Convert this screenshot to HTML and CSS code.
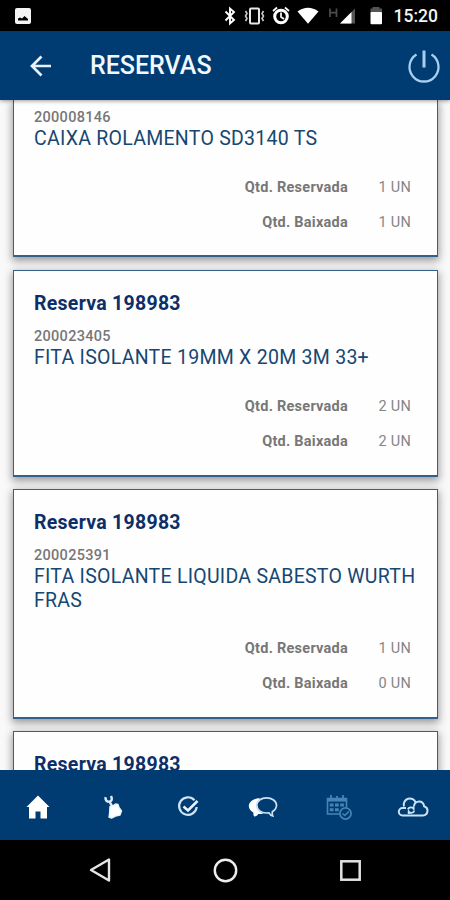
FILE: index.html
```html
<!DOCTYPE html>
<html lang="pt-BR">
<head>
    <meta charset="UTF-8">
    <meta name="viewport" content="width=device-width, initial-scale=1.0">
    <title>Reservas</title>
    <link rel="stylesheet" href="styles.css">
</head>
<body>
    <div class="app">
        <div class="status-bar">
            <svg class="status-photo" width="16" height="16" viewBox="0 0 16 16">
                <rect width="16" height="16" rx="2" fill="#f4f4f4"/>
                <path d="M3 12.500v-2l2-1 2 1 2.500-2.500 3.500 3v1.500z" fill="#000"/>
            </svg>
            <svg class="status-icons" width="162" height="20" viewBox="222 6 162 20">
                <path d="M225.500 11.500l8.500 8.500-4 3.500V8.500l4 3.500-8.500 8.500" fill="none" stroke="#fff" stroke-width="1.900"/>
                <rect x="250" y="8.500" width="9" height="15" rx="1" fill="none" stroke="#e8e8e8" stroke-width="2"/>
                <path d="M245.500 11l1.500 2.500-1.500 2.500 1.500 2.500-1.500 2.500M263.500 11l-1.500 2.500 1.500 2.500-1.500 2.500 1.500 2.500" fill="none" stroke="#ccc" stroke-width="1.600"/>
                <circle cx="281" cy="16.500" r="6.300" fill="none" stroke="#fff" stroke-width="3"/>
                <path d="M281 12.500v4.500l3 2M273 11l4-3.500M289 11l-4-3.500" fill="none" stroke="#fff" stroke-width="1.700"/>
                <path d="M297.500 11.500Q308 4 318.500 11.500L308 23.700z" fill="#fff"/>
                <path d="M340 23.500L355 8.500v15z" fill="#555"/>
                <path d="M340 23.500L351.500 12v11.500z" fill="#fff"/>
                <path d="M330 8.500v8.500M336.500 8.500v8.500M330 12.700h6.500" fill="none" stroke="#4c4c4c" stroke-width="1.700"/>
                <path d="M370.500 8.500h2v-1.500h7v1.500h2.500v5h-11.500z" fill="#555"/>
                <rect x="370.500" y="12" width="11.500" height="12.300" rx="1" fill="#fff"/>
            </svg>
            <span class="clock">15:20</span>
        </div>

        <header class="header">
            <svg class="back" width="22" height="22" viewBox="0 0 22 22">
                <path d="M21 11H2.500M11.500 1.500L2 11l9.500 9.500" fill="none" stroke="#e6f1fc" stroke-width="2.700"/>
            </svg>
            <h1>RESERVAS</h1>
            <svg class="power" width="34" height="34" viewBox="0 0 34 34">
                <path d="M9.500 5.600a14.500 14.500 0 1 0 15 0" fill="none" stroke="#a9cff0" stroke-width="2.300"/>
                <path d="M17 1.500v17" stroke="#a9cff0" stroke-width="3"/>
            </svg>
        </header>

        <main class="list">
            <div class="card card-top">
                <div class="code">200008146</div>
                <div class="item">CAIXA ROLAMENTO SD3140 TS</div>
                <div class="amounts">
                    <div class="row"><b>Qtd. Reservada</b><span>1 UN</span></div>
                    <div class="row"><b>Qtd. Baixada</b><span>1 UN</span></div>
                </div>
            </div>
            <div class="card">
                <h2>Reserva 198983</h2>
                <div class="code">200023405</div>
                <div class="item">FITA ISOLANTE 19MM X 20M 3M 33+</div>
                <div class="amounts">
                    <div class="row"><b>Qtd. Reservada</b><span>2 UN</span></div>
                    <div class="row"><b>Qtd. Baixada</b><span>2 UN</span></div>
                </div>
            </div>
            <div class="card card-tall">
                <h2>Reserva 198983</h2>
                <div class="code">200025391</div>
                <div class="item">FITA ISOLANTE LIQUIDA SABESTO WURTH FRAS</div>
                <div class="amounts">
                    <div class="row"><b>Qtd. Reservada</b><span>1 UN</span></div>
                    <div class="row"><b>Qtd. Baixada</b><span>0 UN</span></div>
                </div>
            </div>
            <div class="card">
                <h2>Reserva 198983</h2>
            </div>
        </main>

        <nav class="tabs">
            <a class="tab">
                <svg width="24" height="24" viewBox="0 0 24 24">
                    <path d="M12 .5L.5 12H3v11.500h6.500v-7h5v7H21V12h2.500z" fill="#fff"/>
                </svg>
            </a>
            <a class="tab">
                <svg width="24" height="24" viewBox="0 0 24 24">
                    <path d="M4.700 2.200c-.7 2.500.8 4.800 3.600 4.500 2.500-.2 3.300-2.500 1.700-5.700M8.500 6.500l2.500 4.500" fill="none" stroke="#dcebf7" stroke-width="2.500"/>
                    <path d="M9 11.500l3.500-1 2-1.500 2.500.5 1 3 2.500 3.500-1.500 4-4.500 1-4 2-2.500-1 .5-3z" fill="#fff" stroke="#e8f3fb" stroke-width="1.400" stroke-linejoin="round"/>
                </svg>
            </a>
            <a class="tab">
                <svg width="24" height="24" viewBox="0 0 24 24">
                    <path d="M18.500 5.200A8.800 8.800 0 1 0 20.700 12" fill="none" stroke="#cfe4f5" stroke-width="2.200"/>
                    <path d="M7.500 11.500l4.500 4 9.500-9.500" fill="none" stroke="#e6f2fc" stroke-width="2.500"/>
                </svg>
            </a>
            <a class="tab">
                <svg width="30" height="24" viewBox="0 0 30 24">
                    <path d="M12 3.200C5 3.200.8 7 .8 11c0 3 2 5 4.500 6.500 0 2 .3 3 1 4 2 0 3-1 4-2.500h5C10 16 9 13 8.500 9.500z" fill="#fff"/>
                    <path d="M18.500 2.800c-5.500 0-9.700 3.400-9.700 7.500 0 4.500 4.200 7.700 9.700 7.700l2.500-.2c1 1.800 2 3 3.700 3.200-.5-1-.6-2.500-.4-4.300 2.900-1.700 4.200-3.900 4.200-6.400 0-4.100-4.500-7.500-10-7.500z" fill="#003c71" stroke="#cde2f3" stroke-width="1.700"/>
                </svg>
            </a>
            <a class="tab">
                <svg width="28" height="28" viewBox="0 0 28 28">
                    <g fill="none" stroke="#4585b5">
                        <path d="M15 21H3.500V5.500h19V14" stroke-width="1.600"/>
                        <path d="M3 6.800h20" stroke-width="3.500"/>
                        <path d="M7 2v5M19 2v5M13 3v3" stroke-width="1.800"/>
                        <path d="M5.800 12h3.700M11 12h3.700M16.200 12h3.700M5.800 16.700h3.700M11 16.700h3.700" stroke-width="3"/>
                        <circle cx="21.500" cy="20.500" r="5.600" stroke-width="1.700"/>
                        <path d="M18.500 20.500l2.300 2 4-4" stroke-width="1.600"/>
                    </g>
                </svg>
            </a>
            <a class="tab">
                <svg width="32" height="26" viewBox="0 0 32 26">
                    <g fill="none" stroke="#cbe3f8" stroke-width="2">
                        <path d="M7 12.500A6 6 0 0 1 18.800 8.800"/>
                        <path d="M9 14H5.500a3.700 3.700 0 0 0 0 7.400H26a4.600 4.600 0 0 0 1.200-9c-.5-3-2.500-4.900-5-4.900-2.800 0-5 2-5.200 4.700"/>
                        <path d="M10.800 15.200c1.500-2.300 4.500-2.300 5.800-.4v-2.600M17.500 17c-1.500 2.300-4.500 2.300-5.800.4V20" stroke-width="1.800"/>
                    </g>
                </svg>
            </a>
        </nav>

        <div class="system-nav">
            <svg width="26" height="28" viewBox="0 0 26 28">
                <path d="M22 3.500v21L4 14z" fill="none" stroke="#e6e6e6" stroke-width="2.400" stroke-linejoin="round"/>
            </svg>
            <svg width="26" height="28" viewBox="0 0 26 28">
                <circle cx="13.500" cy="14.500" r="10.700" fill="none" stroke="#eee" stroke-width="2.400"/>
            </svg>
            <svg width="26" height="28" viewBox="0 0 26 28">
                <rect x="4.300" y="5.300" width="18.400" height="18.400" fill="none" stroke="#e2e2e2" stroke-width="2.500"/>
            </svg>
        </div>
    </div>
</body>
</html>
```
FILE: styles.css
```css
* {
    box-sizing: border-box;
}
body {
    margin: 0;
    font-family: Roboto, Arial, sans-serif;
    background-color: #000;
}
svg {
    display: block;
}
.app {
    display: flex;
    flex-direction: column;
    width: 450px;
    height: 900px;
    overflow: hidden;
}
.status-bar {
    display: flex;
    align-items: center;
    height: 31px;
    padding: 1px 12px 0 15px;
    background-color: #000;
    color: #f4f4f4;
}
.status-icons {
    margin-left: auto;
}
.clock {
    margin-left: 10px;
    font-size: 17.5px;
    font-weight: 500;
}
.header {
    display: flex;
    align-items: center;
    height: 69px;
    padding: 0 9px 0 30px;
    background-color: #003c71;
    box-shadow: 0 1px 4px rgba(0, 0, 0, 0.4);
    z-index: 1;
}
.header h1 {
    margin: 0 0 0 38px;
    font-size: 25px;
    font-weight: 500;
    color: #f2f8ff;
}
.power {
    margin-left: auto;
}
.list {
    height: 670px;
    padding: 0 12px 0 13px;
    overflow: hidden;
    background-color: #f9f9f9;
}
.card {
    margin-bottom: 12px;
    padding: 21px 20px 15px;
    height: 207px;
    background-color: #fefefe;
    border: 1px solid #34618a;
    border-bottom-width: 2px;
    box-shadow: 0 3px 8px 1px rgba(0, 0, 0, 0.38);
}
.card-tall {
    height: 230px;
}
.card-top {
    margin-bottom: 13px;
    height: 157px;
    padding-top: 9px;
    border-top: none;
}
.card h2 {
    margin: 0 0 12px;
    font-size: 19.5px;
    line-height: 24px;
    letter-spacing: 0.27px;
    font-weight: bold;
    color: #0c2f68;
}
.code {
    font-size: 14.5px;
    line-height: 18px;
    letter-spacing: 0.3px;
    font-weight: 500;
    color: #777;
}
.item {
    margin-right: -4px;
    font-size: 19.5px;
    line-height: 23.5px;
    letter-spacing: 0.27px;
    color: #164772;
}
.amounts {
    margin-top: 19px;
}
.row {
    display: flex;
    justify-content: flex-end;
    padding-right: 6px;
    font-size: 14.5px;
    line-height: 35px;
    letter-spacing: 0.25px;
    color: #858585;
}
.row b {
    color: #777;
}
.row span {
    width: 63px;
    text-align: right;
}
.tabs {
    display: flex;
    height: 70px;
    background-color: #003c71;
    z-index: 1;
}
.tab {
    display: flex;
    flex: 1;
    align-items: center;
    justify-content: center;
    padding-top: 3px;
}
.system-nav {
    display: flex;
    align-items: center;
    justify-content: space-between;
    height: 60px;
    padding: 0 87px;
    background-color: #000;
}
```
